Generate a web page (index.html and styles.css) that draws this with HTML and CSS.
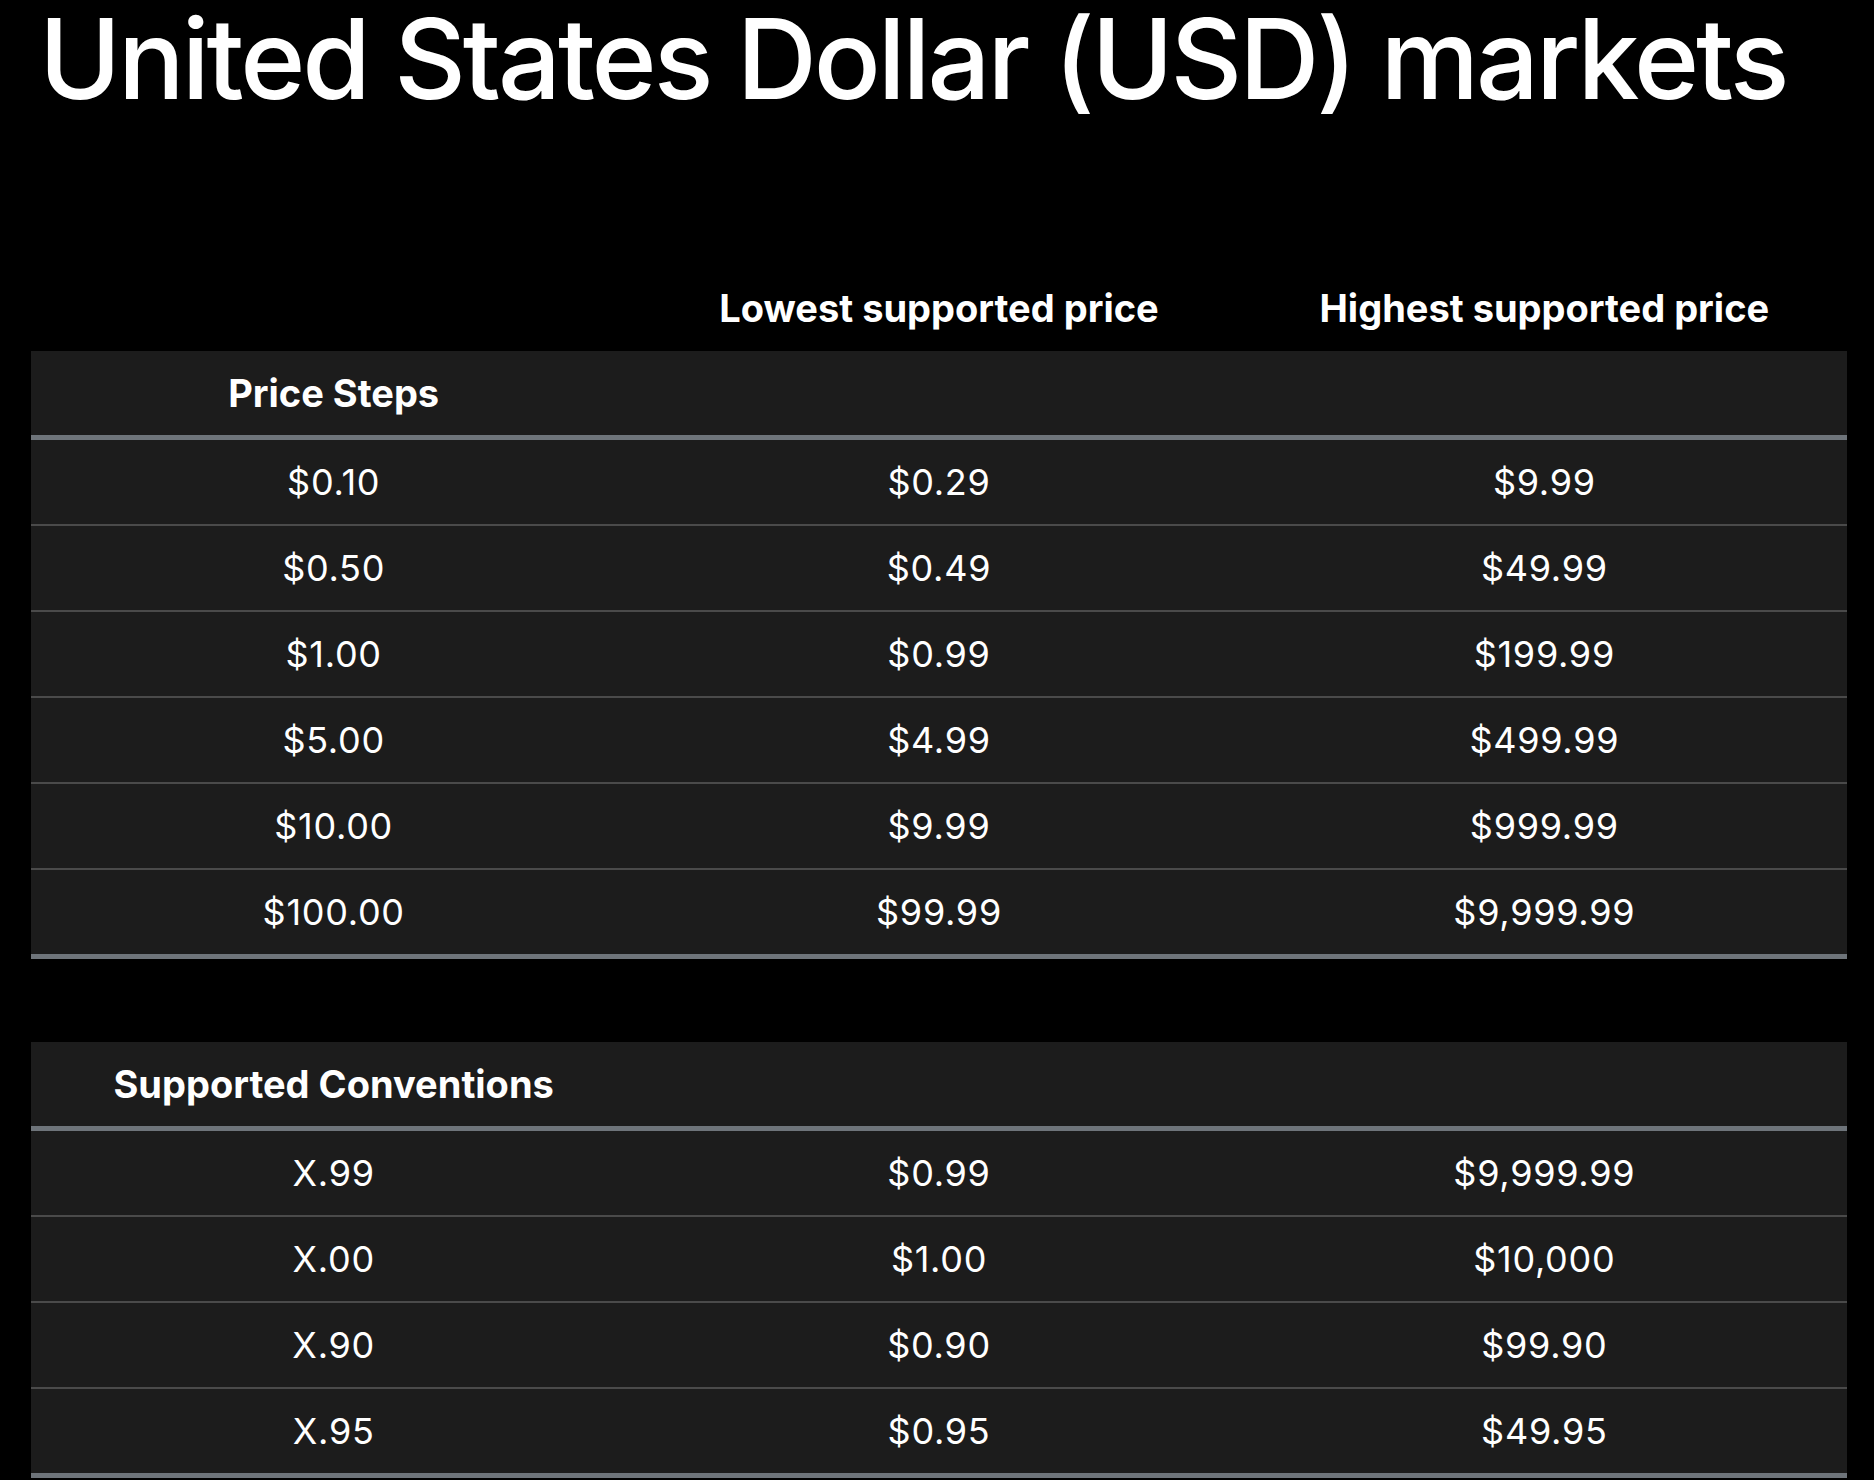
FILE: index.html
```html
<!DOCTYPE html>
<html lang="en">
<head>
<meta charset="utf-8">
<title>United States Dollar (USD) markets</title>
<link rel="stylesheet" href="styles.css">
</head>
<body>
<main class="page">
  <h1 class="title">United States Dollar (USD) markets</h1>

  <table class="prices">
    <thead>
      <tr class="col-head">
        <th></th>
        <th>Lowest supported price</th>
        <th>Highest supported price</th>
      </tr>
    </thead>
    <tbody>
      <tr class="section"><th>Price Steps</th><td></td><td></td></tr>
      <tr><td>$0.10</td><td>$0.29</td><td>$9.99</td></tr>
      <tr><td>$0.50</td><td>$0.49</td><td>$49.99</td></tr>
      <tr><td>$1.00</td><td>$0.99</td><td>$199.99</td></tr>
      <tr><td>$5.00</td><td>$4.99</td><td>$499.99</td></tr>
      <tr><td>$10.00</td><td>$9.99</td><td>$999.99</td></tr>
      <tr class="last"><td>$100.00</td><td>$99.99</td><td>$9,999.99</td></tr>
    </tbody>
  </table>

  <table class="prices second">
    <tbody>
      <tr class="section"><th>Supported Conventions</th><td></td><td></td></tr>
      <tr><td>X.99</td><td>$0.99</td><td>$9,999.99</td></tr>
      <tr><td>X.00</td><td>$1.00</td><td>$10,000</td></tr>
      <tr><td>X.90</td><td>$0.90</td><td>$99.90</td></tr>
      <tr class="last"><td>X.95</td><td>$0.95</td><td>$49.95</td></tr>
    </tbody>
  </table>
</main>
</body>
</html>
```

FILE: styles.css
```css
html, body {
  margin: 0;
  padding: 0;
  background: #000;
  color: #fff;
  font-family: Inter, "Liberation Sans", "Noto Sans", sans-serif;
}

.page {
  padding: 0 27px 0 31px;
}

.title {
  margin: 5px 0 152px 8px;
  font-size: 111px;
  line-height: 108px;
  font-weight: 500;
  letter-spacing: -0.028em;
  white-space: nowrap;
}

.prices {
  width: 1816px;
  table-layout: fixed;
  border-collapse: collapse;
  border-spacing: 0;
}

.prices th,
.prices td {
  padding: 21px 0;
  line-height: 42px;
  text-align: center;
  vertical-align: middle;
}

.col-head th {
  padding: 22px 0;
  font-size: 38px;
  font-weight: 700;
  background: transparent;
}

.prices tbody tr {
  background: #1c1c1c;
}

.prices tbody td {
  font-size: 36px;
  font-weight: 400;
  letter-spacing: 0.02em;
  border-bottom: 2px solid #4a4a4a;
}

.prices .section th,
.prices .section td {
  font-size: 38px;
  font-weight: 700;
  letter-spacing: 0;
  border-bottom: 5px solid #6e747a;
}

.prices tr.last td {
  border-bottom: 5px solid #6e747a;
}

.second {
  margin-top: 83px;
}
```
